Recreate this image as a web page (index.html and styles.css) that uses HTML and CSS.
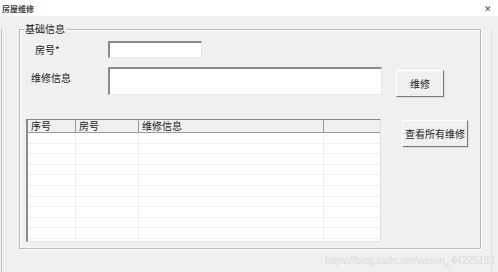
FILE: index.html
```html
<!DOCTYPE html>
<html lang="zh-CN">
<head>
    <meta charset="UTF-8">
    <title>房屋维修</title>
    <link rel="stylesheet" href="styles.css">
</head>
<body>
    <div class="titlebar">
        <span class="title">房屋维修</span>
        <span class="close">&#x2715;</span>
    </div>

    <div class="window">
        <div class="group">
            <div class="legend">基础信息</div>

            <div class="form">
                <label class="lbl lbl-room">房号*</label>
                <div class="field"><div class="input input-room"></div></div>
                <div></div>

                <label class="lbl lbl-info">维修信息</label>
                <div class="field"><div class="input input-info"></div></div>
                <div><button class="btn btn-repair">维修</button></div>
            </div>

            <div class="list-row">
                <div class="grid-box">
                    <table class="grid">
                        <thead>
                            <tr>
                                <th class="c1">序号</th>
                                <th class="c2">房号</th>
                                <th class="c3">维修信息</th>
                                <th class="c4"></th>
                            </tr>
                        </thead>
                        <tbody id="rows"></tbody>
                    </table>
                </div>
                <button class="btn btn-all">查看所有维修</button>
            </div>
        </div>
        <div class="watermark">https://blog.csdn.net/weixin_44225182</div>
    </div>

    <script>
        // lignes vides du tableau
        const body = document.getElementById('rows');
        for (let i = 0; i < 10; i++) {
            const row = body.insertRow();
            for (let j = 0; j < 4; j++) row.insertCell(j);
        }
    </script>
</body>
</html>
```

FILE: styles.css
```css
body {
    margin: 0;
    width: 498px;
    height: 272px;
    overflow: hidden;
    background: #f0f0f0;
    font-family: "Noto Sans CJK SC", "Liberation Sans", sans-serif;
    font-size: 10px;
    color: #1a1a1a;
}
.titlebar {
    height: 16px;
    background: #ffffff;
    display: flex;
    justify-content: space-between;
    align-items: center;
    padding: 0 6px 0 2px;
}
.title {
    font-size: 8px;
    font-weight: bold;
    color: #444;
}
.close {
    font-size: 9px;
    color: #555;
    margin-top: 1px;
}
.window {
    height: 256px;
    width: 491px;
    margin-left: 1px;
    border-left: 1px solid #c4c4c4;
    border-right: 1px solid #e2e2e2;
    box-sizing: border-box;
}
.group {
    margin: 13px 0 0 17px;
    width: 462px;
    height: 220px;
    box-sizing: border-box;
    border: 1px solid #b8b8b8;
    box-shadow: inset 1px 1px 0 #ffffff, 1px 1px 0 #ffffff;
}
.legend {
    width: max-content;
    height: 12px;
    line-height: 12px;
    margin: -7px 0 0 4px;
    padding: 0 1px;
    background: #f0f0f0;
    font-size: 10px;
}
.form {
    display: grid;
    grid-template-columns: 88px 288px auto;
    row-gap: 9px;
    margin-top: 6px;
}
.lbl {
    line-height: 12px;
}
.lbl-room {
    align-self: center;
    padding-left: 15px;
}
.lbl-info {
    padding: 5px 0 0 11px;
}
.input {
    background: #ffffff;
    box-sizing: border-box;
    border-top: 2px solid #8a8a8a;
    border-left: 2px solid #8a8a8a;
    border-right: 1px solid #e6e6e6;
    border-bottom: 1px solid #e6e6e6;
}
.input-room {
    width: 94px;
    height: 17px;
}
.input-info {
    width: 274px;
    height: 28px;
}
.btn {
    font-family: inherit;
    font-size: 10px;
    color: #1a1a1a;
    background: #f0f0f0;
    border: 1px solid #ffffff;
    border-right-color: #7a7a7a;
    border-bottom-color: #7a7a7a;
    box-shadow: 1px 1px 0 #dcdcdc;
    padding: 0;
    height: 27px;
}
.btn-repair {
    width: 48px;
    margin-top: 3px;
}
.list-row {
    display: flex;
    align-items: flex-start;
    gap: 21px;
    margin: 22px 0 0 6px;
}
.btn-all {
    width: 66px;
    margin-top: 1px;
}
.grid-box {
    width: 355px;
    height: 123px;
    box-sizing: border-box;
    background: #ffffff;
    border-top: 1px solid #8a8a8a;
    border-left: 2px solid #8a8a8a;
    border-right: 1px solid #e2e2e2;
    border-bottom: 1px solid #e2e2e2;
    overflow: hidden;
}
.grid {
    width: 100%;
    border-collapse: collapse;
    table-layout: fixed;
}
.grid th {
    height: 12px;
    padding: 0 0 0 3px;
    font-weight: normal;
    text-align: left;
    line-height: 12px;
    background: #f0f0f0;
    border-right: 1px solid #9a9a9a;
    border-bottom: 1px solid #9a9a9a;
}
.grid th.c4 {
    border-right: none;
}
.grid .c1 { width: 44px; }
.grid .c2 { width: 59px; }
.grid .c3 { width: 181px; }
.grid td {
    height: 9.6px;
    padding: 0;
    border-right: 1px solid #ececec;
    border-bottom: 1px solid #f0f0f0;
}
.grid td:last-child {
    border-right: none;
}
.watermark {
    text-align: right;
    margin: 6px 0 0 0;
    width: 493px;
    font-family: "Liberation Sans", sans-serif;
    font-size: 10px;
    color: #dcdcdc;
}
```
